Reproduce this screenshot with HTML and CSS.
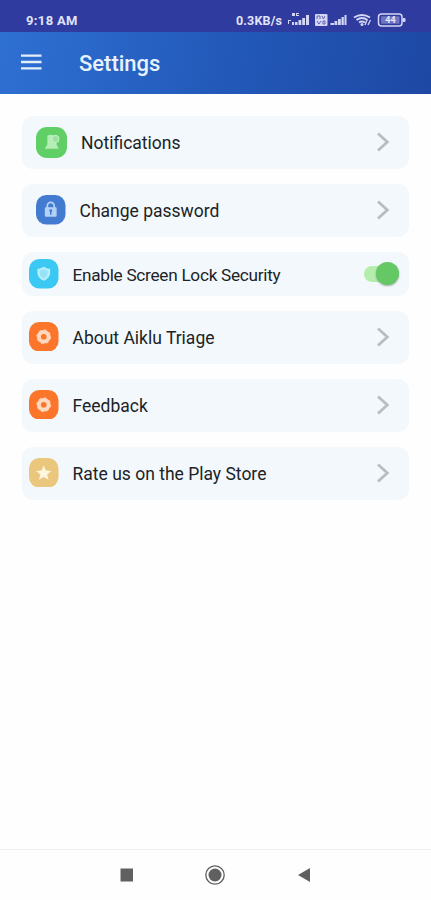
FILE: index.html
```html
<!DOCTYPE html>
<html lang="en">
<head>
<meta charset="utf-8">
<title>Settings</title>
<link rel="stylesheet" href="styles.css">
</head>
<body>
<div class="screen">
  <div class="status">
    <span class="clock">9:18 AM</span>
    <span class="speed">0.3KB/s</span>
    <svg class="indicators" width="120" height="16" viewBox="0 0 120 16" fill="#d3d6f4">
      <path d="M5 1h3v3H5zM9 1h3v1h-2v1h2v1H9zM1 8h3v1H2v3H1zM5 10h2v3H5zM8 10h2.500v3H8zM11.500 8h2.800v5h-2.800zM15.200 6H18v7h-2.800zM19 3h3v10h-3z"/>
      <rect x="28" y="2" width="12.500" height="12" rx="1"/>
      <path d="M30 7V4h3v3M35 4l1.500 3L38 4M30 9l2 3 2-3M36 9v3h2V9z" fill="none" stroke="#6267b6"/>
      <path d="M43.500 11H47v2h-3.500zM47.500 9h2.800v4h-2.800zM51 7h2.800v6H51zM54.500 5h2.300v8h-2.300zM57.500 3h2v10h-2z"/>
      <path d="M67 5.500q8-5 16 0M69.500 8q5.500-4 11 0M72 10.500q3-2 6 0" fill="none" stroke="#d3d6f4" stroke-width="2"/>
      <circle cx="75" cy="12.500" r="1.500"/>
      <path d="M78 13l2-5M81 13l2.500-5" fill="none" stroke="#d3d6f4" stroke-width="1.300"/>
      <rect x="91.500" y="2" width="23.500" height="12" rx="3" fill="none" stroke="#d3d6f4" stroke-width="1.500"/>
      <rect x="94" y="4.300" width="18.500" height="7.500" rx="1" fill="#6f75c2"/>
      <rect x="115.500" y="6" width="3" height="4" rx="1"/>
      <text class="charge" x="103.500" y="11.300" text-anchor="middle">44</text>
    </svg>
  </div>
  <header class="appbar">
    <svg class="menu" width="22" height="16" viewBox="0 0 22 16"><path d="M1 1.700h20.500M1 8h20.500M1 14.300h20.500" stroke="#e4effc" stroke-width="2.300"/></svg>
    <h1 class="title">Settings</h1>
  </header>
  <main class="list">
    <div class="row inset">
      <svg class="icon large" viewBox="0 0 30 30"><rect width="30" height="30" rx="10.500" fill="#60cf66"/><path d="M11 8.500q4-2.500 8 1l1 8 2 3.500h-13.500l2.500-4z" fill="#b5edb7"/><circle cx="18.800" cy="11.500" r="3.300" fill="#9be29f" stroke="#c2f1c3"/></svg>
      <span class="label">Notifications</span>
      <svg class="chevron" viewBox="0 0 14 20"><path d="M2 1.500l9.300 8.500L2 18.500"/></svg>
    </div>
    <div class="row inset">
      <svg class="icon" viewBox="0 0 30 30"><rect width="30" height="30" rx="10.500" fill="#437bd0"/><path d="M11.500 14v-3a3.500 3.500 0 0 1 7 0v3" fill="none" stroke="#b2d1f6" stroke-width="1.800"/><rect x="9" y="12.500" width="12" height="9.500" rx="1" fill="#b2d1f6"/><path d="M15 16v4" stroke="#437bd0" stroke-width="1.500"/><circle cx="15" cy="16" r="1.400" fill="#437bd0"/></svg>
      <span class="label">Change password</span>
      <svg class="chevron" viewBox="0 0 14 20"><path d="M2 1.500l9.300 8.500L2 18.500"/></svg>
    </div>
    <div class="row short">
      <svg class="icon" viewBox="0 0 30 30"><rect width="30" height="30" rx="10.500" fill="#3bc9f3"/><path d="M15 8q3 2 6.500 2.200v4q0 5-6.500 8-6.500-3-6.500-8v-4Q12 10 15 8z" fill="#b9eefb"/><path d="M15 10.300q2 1.400 4 1.500v3q0 3.200-4 5.200-4-2-4-5.200v-3q2-.1 4-1.500z" fill="#96e2f8"/></svg>
      <span class="label tight">Enable Screen Lock Security</span>
      <span class="switch"><span class="knob"></span></span>
    </div>
    <div class="row">
      <svg class="icon" viewBox="0 0 30 30"><rect width="30" height="30" rx="10.500" fill="#fb762b"/><circle cx="15" cy="15" r="4.900" fill="none" stroke="#ffd9bf" stroke-width="4"/><circle cx="15" cy="15" r="7" fill="none" stroke="#ffd9bf" stroke-width="1" stroke-dasharray="2.750 2.750"/></svg>
      <span class="label">About Aiklu Triage</span>
      <svg class="chevron" viewBox="0 0 14 20"><path d="M2 1.500l9.300 8.500L2 18.500"/></svg>
    </div>
    <div class="row">
      <svg class="icon" viewBox="0 0 30 30"><rect width="30" height="30" rx="10.500" fill="#fb762b"/><circle cx="15" cy="15" r="4.900" fill="none" stroke="#ffd9bf" stroke-width="4"/><circle cx="15" cy="15" r="7" fill="none" stroke="#ffd9bf" stroke-width="1" stroke-dasharray="2.750 2.750"/></svg>
      <span class="label">Feedback</span>
      <svg class="chevron" viewBox="0 0 14 20"><path d="M2 1.500l9.300 8.500L2 18.500"/></svg>
    </div>
    <div class="row">
      <svg class="icon" viewBox="0 0 30 30"><rect width="30" height="30" rx="10.500" fill="#ebc77e"/><path d="M15 7.500l2.200 5.200 5.600.4-4.300 3.600 1.400 5.500-4.900-3-4.900 3 1.400-5.500-4.300-3.600 5.600-.4z" fill="#fff6e0"/></svg>
      <span class="label">Rate us on the Play Store</span>
      <svg class="chevron" viewBox="0 0 14 20"><path d="M2 1.500l9.300 8.500L2 18.500"/></svg>
    </div>
  </main>
  <nav class="navbar">
    <svg width="14" height="14" viewBox="0 0 14 14"><rect x=".5" y=".5" width="12.500" height="13" fill="#606060"/></svg>
    <svg width="20" height="20" viewBox="0 0 20 20"><circle cx="10" cy="10" r="9.200" fill="none" stroke="#606060" stroke-width="1.300"/><circle cx="10" cy="10" r="6.500" fill="#606060"/></svg>
    <svg width="14" height="16" viewBox="0 0 14 16"><path d="M1 8l12-7v14z" fill="#606060"/></svg>
  </nav>
</div>
</body>
</html>
```
FILE: styles.css
```css
* { box-sizing: border-box; }
body { margin: 0; background: #fefefe; font-family: Roboto, "Liberation Sans", sans-serif; }
.screen { width: 431px; height: 900px; display: flex; flex-direction: column; overflow: hidden; }
.status { height: 32px; flex: none; background: #303b9f; display: flex; align-items: center; padding: 8px 0 0 26px; color: #e0e3fa; font-size: 13px; letter-spacing: .35px; font-weight: 700; white-space: nowrap; }
.clock { width: 210px; }
.speed { width: 51px; font-size: 12.5px; letter-spacing: .15px; }
.indicators { flex: none; }
.charge { font-size: 9px; letter-spacing: 0; font-weight: 700; fill: #e6e8fb; }
.appbar { height: 61.5px; flex: none; display: flex; align-items: center; padding-left: 20px; background: linear-gradient(100deg, #2e70d2, #2258b8 55%, #1e48a4); }
.menu { flex: none; margin-top: -1px; }
.title { margin: 3px 0 0 37px; font-size: 22px; line-height: 28px; font-weight: 500; color: #e8f2fe; }
.list { flex: 1; display: flex; flex-direction: column; gap: 15px; padding: 22.5px 22px 0; }
.row { flex: none; height: 53px; border-radius: 11px; background: #f2f8fc; display: flex; align-items: center; padding: 0 19px 1px 7px; }
.inset { padding-left: 14px; }
.short { height: 43.5px; padding-right: 10px; padding-bottom: 0; }
.icon { width: 29.5px; height: 29.5px; flex: none; }
.large { width: 31px; height: 31px; }
.label { flex: 1; margin: 2px 0 0 14px; font-size: 17.5px; line-height: 22px; color: #202326; white-space: nowrap; }
.tight { font-size: 17.2px; letter-spacing: -.27px; }
.chevron { width: 14px; height: 20px; flex: none; fill: none; stroke: #b9bdc0; stroke-width: 2.8; }
.switch { width: 35px; height: 16px; border-radius: 8px; background: #b5edac; display: flex; align-items: center; justify-content: flex-end; }
.knob { width: 23px; height: 23px; flex: none; border-radius: 50%; background: #64c964; box-shadow: 0 1px 2px rgba(0, 0, 0, .3); }
.navbar { height: 51px; flex: none; border-top: 1px solid #f1f1f1; display: flex; align-items: center; justify-content: space-between; padding: 0 120.5px 0 119.5px; }
```
